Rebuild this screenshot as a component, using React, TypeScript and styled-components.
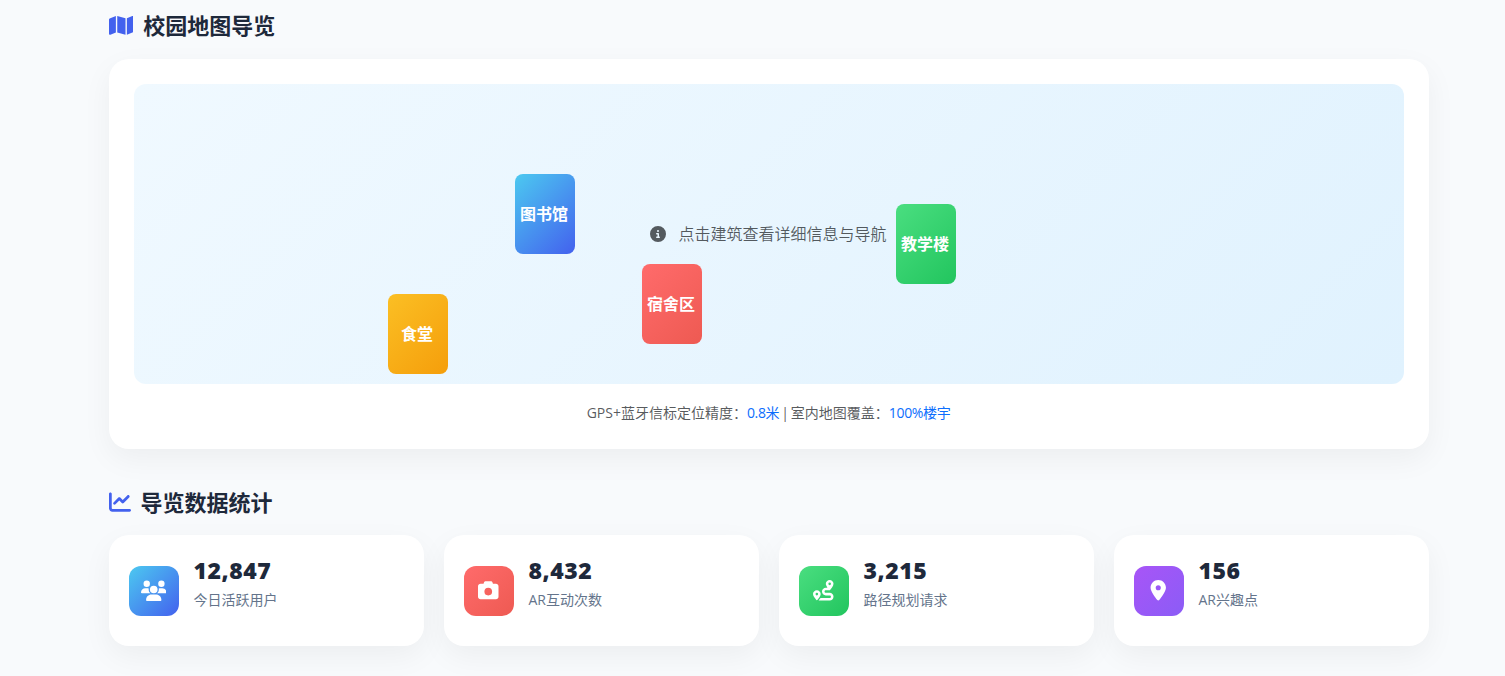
import React from "react";
import styled, { createGlobalStyle } from "styled-components";
import { FaMap, FaChartLine, FaUsers, FaCamera, FaRoute, FaLocationDot, FaCircleInfo } from "react-icons/fa6";

const GlobalStyle = createGlobalStyle`
  *, *::before, *::after { box-sizing: border-box; }
  body {
    margin: 0;
    background: #f8fafc;
    color: #1e293b;
    font-family: "Open Sans", "Noto Sans CJK SC", sans-serif;
    overflow: hidden;
  }
`;

const Page = styled.main`
  height: 676px;
  padding: 10.4px 76.5px 0 108.5px;
  overflow: hidden;
`;

const SectionTitle = styled.h2<{ $gap: number }>`
  display: flex;
  align-items: center;
  gap: 10px;
  height: 30px;
  margin: 0 0 ${(p) => p.$gap}px;
  font-size: 22px;
  font-weight: 700;
  line-height: 30px;
  color: #1e293b;
  svg { color: #4361ee; flex: none; }
`;

const Card = styled.section`
  background: #fff;
  border-radius: 20px;
  box-shadow: 0 10px 30px rgba(0, 0, 0, 0.05);
`;

const MapCard = styled(Card)`
  height: 390px;
  padding: 25px;
  margin-bottom: 38px;
`;

const MapCanvas = styled.div`
  position: relative;
  display: flex;
  align-items: center;
  justify-content: center;
  height: 300px;
  border-radius: 12px;
  background: linear-gradient(135deg, #f0f9ff 0%, #e0f2fe 100%);
`;

const Hint = styled.p`
  display: flex;
  align-items: center;
  gap: 12px;
  margin: 0;
  font-size: 16px;
  font-weight: 350;
  line-height: 24px;
  color: rgba(33, 37, 41, 0.75);
`;

const Building = styled.div<{ $x: number; $y: number; $fill: string }>`
  position: absolute;
  left: ${(p) => p.$x}%;
  top: ${(p) => p.$y}%;
  display: flex;
  align-items: center;
  justify-content: center;
  width: 60px;
  height: 80px;
  padding: 0 1px 2px 0;
  border-radius: 8px;
  background: ${(p) => p.$fill};
  color: #fff;
  font-size: 16px;
  font-weight: 700;
  white-space: nowrap;
`;

const MapNote = styled.p`
  margin: 18px 0 0;
  text-align: center;
  font-size: 14px;
  line-height: 21px;
  word-spacing: -1.7px;
  color: rgba(33, 37, 41, 0.75);
`;

const Accent = styled.span`
  color: #0d6efd;
  letter-spacing: -0.35px;
`;

const StatGrid = styled.div`
  display: grid;
  grid-template-columns: repeat(4, 1fr);
  gap: 20px;
`;

const StatCard = styled(Card)`
  display: flex;
  align-items: center;
  gap: 15px;
  height: 111px;
  padding: 20px;
`;

const StatIcon = styled.div<{ $fill: string }>`
  display: flex;
  align-items: center;
  justify-content: center;
  flex: none;
  width: 50px;
  height: 50px;
  border-radius: 12px;
  background: ${(p) => p.$fill};
  color: #fff;
`;

const StatText = styled.div`
  height: 71px;
`;

const StatValue = styled.div`
  margin-top: 1px;
  font-size: 23px;
  font-weight: 800;
  line-height: 29px;
  letter-spacing: 0.55px;
`;

const StatLabel = styled.div`
  margin-top: 4px;
  font-size: 14px;
  line-height: 21px;
  color: #64748b;
`;

const fills = {
  blue: "linear-gradient(135deg, #4cc9f0, #4361ee)",
  green: "linear-gradient(135deg, #4ade80, #22c55e)",
  red: "linear-gradient(135deg, #ff6b6b, #ee5a52)",
  amber: "linear-gradient(135deg, #fbbf24, #f59e0b)",
  violet: "linear-gradient(135deg, #a855f7, #8b5cf6)",
};

const buildings = [
  { name: "图书馆", x: 30, y: 30, fill: fills.blue },
  { name: "教学楼", x: 60, y: 40, fill: fills.green },
  { name: "食堂", x: 20, y: 70, fill: fills.amber },
  { name: "宿舍区", x: 40, y: 60, fill: fills.red },
];

const stats = [
  { value: "12,847", label: "今日活跃用户", icon: <FaUsers size={25.5} />, fill: fills.blue },
  { value: "8,432", label: "AR互动次数", icon: <FaCamera size={20.5} />, fill: fills.red },
  { value: "3,215", label: "路径规划请求", icon: <FaRoute size={20.5} />, fill: fills.green },
  { value: "156", label: "AR兴趣点", icon: <FaLocationDot size={20.5} />, fill: fills.violet },
];

export default function App() {
  return (
    <>
      <GlobalStyle />
      <Page>
        <SectionTitle $gap={18.7}>
          <FaMap size={24.75} />
          校园地图导览
        </SectionTitle>
        <MapCard>
          <MapCanvas>
            <Hint>
              <FaCircleInfo size={16} />
              点击建筑查看详细信息与导航
            </Hint>
            {buildings.map((b) => (
              <Building key={b.name} $x={b.x} $y={b.y} $fill={b.fill}>
                {b.name}
              </Building>
            ))}
          </MapCanvas>
          <MapNote>
            GPS+蓝牙信标定位精度：<Accent>0.8米</Accent> | 室内地图覆盖：<Accent>100%楼宇</Accent>
          </MapNote>
        </MapCard>
        <SectionTitle $gap={18}>
          <FaChartLine size={22} />
          导览数据统计
        </SectionTitle>
        <StatGrid>
          {stats.map((s) => (
            <StatCard key={s.label}>
              <StatIcon $fill={s.fill}>{s.icon}</StatIcon>
              <StatText>
                <StatValue>{s.value}</StatValue>
                <StatLabel>{s.label}</StatLabel>
              </StatText>
            </StatCard>
          ))}
        </StatGrid>
      </Page>
    </>
  );
}
